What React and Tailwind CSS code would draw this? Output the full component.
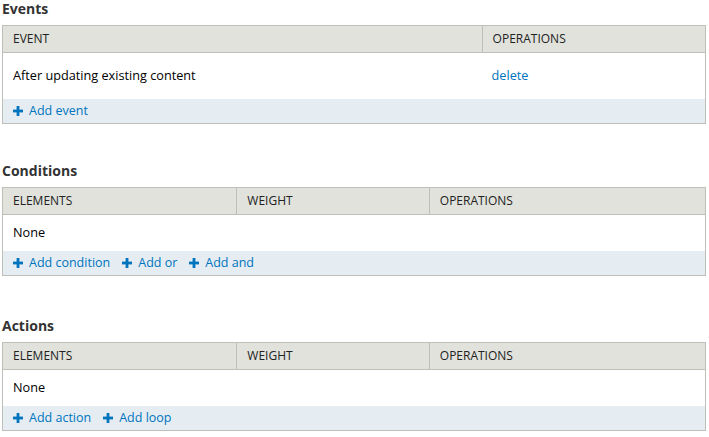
import { Fragment } from 'react';

const PlusIcon = () => (
  <svg className="w-[10px] h-[10px] shrink-0" viewBox="0 0 10 10" fill="#0074bd">
    <rect x="3.6" y="0" width="2.8" height="10" />
    <rect x="0" y="3.6" width="10" height="2.8" />
  </svg>
);

const AddLink = ({ label }) => (
  <a href="#" className="flex items-center gap-[6px] text-[#0074bd]">
    <PlusIcon />
    <span>{label}</span>
  </a>
);

const Section = ({ title, columns, rows, bodyHeight, links, className }) => (
  <section className={className}>
    <h2 className="text-[14px] font-bold text-[#333] leading-[18px] pl-[2px] mb-[7px]">{title}</h2>
    <div className="border border-[#bfbfba] ml-[2px] mr-[3px]">
      <div className="flex h-[27px] bg-[#e1e2dc] border-b border-[#bfbfba] text-[12px] text-[#222]">
        {columns.map((col, i) => (
          <div
            key={col.label}
            className={`flex items-center px-[10px] ${i > 0 ? 'border-l border-[#bfbfba]' : ''}`}
            style={{ width: col.width, flexGrow: i === columns.length - 1 ? 1 : 0 }}
          >
            {col.label}
          </div>
        ))}
      </div>
      <div className="flex bg-white text-[12.7px] text-black" style={{ height: bodyHeight }}>
        {rows.map((cell, i) => (
          <div
            key={i}
            className="flex items-center px-[10px]"
            style={{ width: columns[i].width, flexGrow: i === rows.length - 1 ? 1 : 0 }}
          >
            {cell}
          </div>
        ))}
      </div>
      <div className="flex items-center gap-[12px] h-[24px] bg-[#e5edf3] px-[10px] text-[12.5px]">
        {links.map((l) => (
          <Fragment key={l}>
            <AddLink label={l} />
          </Fragment>
        ))}
      </div>
    </div>
  </section>
);

export default function App() {
  return (
    <div className="w-[709px] bg-white font-['Open_Sans',sans-serif]">
      <Section
        title="Events"
        columns={[
          { label: 'EVENT', width: 480 },
          { label: 'OPERATIONS', width: 224 },
        ]}
        rows={[
          'After updating existing content',
          <a href="#" className="text-[#0074bd]">delete</a>,
        ]}
        bodyHeight={46}
        links={['Add event']}
      />
      <Section
        className="mt-[38px]"
        title="Conditions"
        columns={[
          { label: 'ELEMENTS', width: 234 },
          { label: 'WEIGHT', width: 193 },
          { label: 'OPERATIONS', width: 277 },
        ]}
        rows={['None', '', '']}
        bodyHeight={36}
        links={['Add condition', 'Add or', 'Add and']}
      />
      <Section
        className="mt-[41px]"
        title="Actions"
        columns={[
          { label: 'ELEMENTS', width: 234 },
          { label: 'WEIGHT', width: 193 },
          { label: 'OPERATIONS', width: 277 },
        ]}
        rows={['None', '', '']}
        bodyHeight={36}
        links={['Add action', 'Add loop']}
      />
    </div>
  );
}
